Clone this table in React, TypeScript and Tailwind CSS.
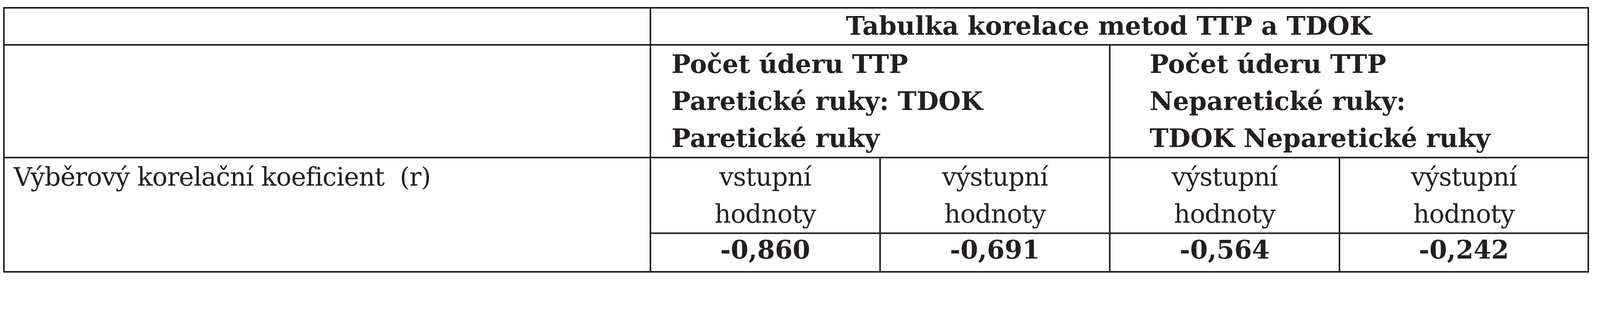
const cell = "border-[4.5px] border-[#231f20] p-0 align-top";

const rows = [
    { top: "vstupní", value: "-0,860" },
    { top: "výstupní", value: "-0,691" },
    { top: "výstupní", value: "-0,564" },
    { top: "výstupní", value: "-0,242" },
];

export default function App() {
    return (
        <div className="min-h-screen bg-white pl-[8px] pt-[18px] font-['DejaVu_Serif',serif] text-[65px] leading-[95px] text-[#231f20]">
            <table className="table-fixed border-collapse border-[4.5px] border-[#231f20] w-[4060px]">
                <colgroup>
                    <col className="w-[1655px]" />
                    <col className="w-[588px]" />
                    <col className="w-[588px]" />
                    <col className="w-[588px]" />
                    <col className="w-[637px]" />
                </colgroup>
                <tbody>
                    <tr className="h-[95px]">
                        <td className={cell}></td>
                        <td colSpan={4} className={`${cell} text-center font-bold leading-[89px] pr-[54px]`}>
                            Tabulka korelace metod TTP a TDOK
                        </td>
                    </tr>
                    <tr className="h-[285px]">
                        <td className={cell}></td>
                        <td colSpan={2} className={`${cell} pl-[52px] font-bold whitespace-nowrap`}>
                            Počet úderu TTP
                            <br />
                            Paretické ruky: TDOK
                            <br />
                            Paretické ruky
                        </td>
                        <td colSpan={2} className={`${cell} pl-[100px] font-bold whitespace-nowrap`}>
                            Počet úderu TTP
                            <br />
                            Neparetické ruky:
                            <br />
                            TDOK Neparetické ruky
                        </td>
                    </tr>
                    <tr className="h-[194px]">
                        <td rowSpan={2} className={`${cell} pl-[23px] whitespace-pre tracking-[-1px]`}>
                            {"Výběrový korelační koeficient  (r)"}
                        </td>
                        {rows.map((r, i) => (
                            <td key={i} className={`${cell} text-center tracking-[-1px]`}>
                                {r.top}
                                <br />
                                hodnoty
                            </td>
                        ))}
                    </tr>
                    <tr className="h-[99px]">
                        {rows.map((r, i) => (
                            <td key={i} className={`${cell} text-center font-bold leading-[80px]`}>
                                {r.value}
                            </td>
                        ))}
                    </tr>
                </tbody>
            </table>
        </div>
    );
}
